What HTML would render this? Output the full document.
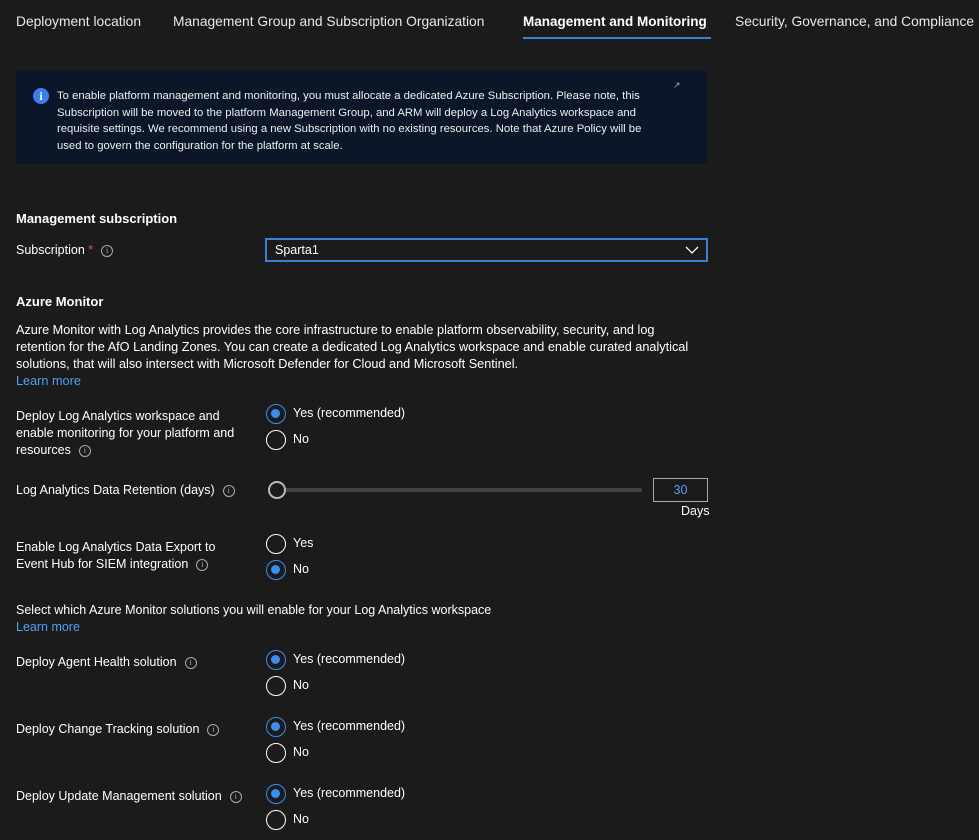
<!DOCTYPE html>
<html><head><style>
*{margin:0;padding:0;box-sizing:border-box}
body{width:979px;height:840px;background:#1b1b1b;color:#fff;font-family:"Liberation Sans",sans-serif;font-size:12.5px;position:relative;overflow:hidden}
.a{position:absolute;white-space:nowrap}
.tab{font-size:13.8px;top:14px}
.info{display:inline-block;width:12px;height:12px;border:1px solid #aaa;border-radius:50%;font-size:8px;line-height:10px;text-align:center;color:#aaa;vertical-align:middle;margin-left:8px;font-family:"Liberation Serif",serif}
.r{position:absolute;width:20px;height:20px;border:1.5px solid #fff;border-radius:50%}
.r.on{border-color:#3b8ef0}
.r.on::after{content:"";position:absolute;left:4px;top:4px;width:9px;height:9px;border-radius:50%;background:#3b8ef0}
.lk{color:#4ea1f5}
</style></head><body>
<div class="a tab" style="left:16px;color:#e8e8e8">Deployment location</div>
<div class="a tab" style="left:173px;color:#e8e8e8">Management Group and Subscription Organization</div>
<div class="a tab" style="left:523px;font-weight:bold;font-size:13.5px">Management and Monitoring</div>
<div class="a" style="left:523px;top:37px;width:188px;height:2px;background:#3b82d6"></div>
<div class="a tab" style="left:735px;color:#e8e8e8">Security, Governance, and Compliance</div>

<div class="a" style="left:16px;top:71px;width:691px;height:93px;background:#0b1629"></div>
<div class="a" style="left:33px;top:88px;width:16px;height:16px;border-radius:50%;background:#3a7ff0;color:#fff;font-weight:bold;font-size:12px;text-align:center;line-height:16px;font-family:'Liberation Serif',serif">i</div>
<div class="a" style="left:673px;top:80px;color:#aaa;font-size:9px">↗</div>
<div class="a" style="left:57px;top:88px;font-size:11.3px;line-height:16.5px;color:#eee">To enable platform management and monitoring, you must allocate a dedicated Azure Subscription. Please note, this<br>Subscription will be moved to the platform Management Group, and ARM will deploy a Log Analytics workspace and<br>requisite settings. We recommend using a new Subscription with no existing resources. Note that Azure Policy will be<br>used to govern the configuration for the platform at scale.</div>

<div class="a" style="left:16px;top:211px;font-weight:bold;font-size:13px">Management subscription</div>
<div class="a" style="left:16px;top:243px">Subscription <span style="color:#e05050">*</span><span class="info">i</span></div>
<div class="a" style="left:265px;top:238px;width:443px;height:24px;border:2px solid #3b82d6;padding:3px 8px">Sparta1</div>
<svg class="a" style="left:685px;top:245px" width="14" height="10"><path d="M1 2 L7 8 L13 2" stroke="#fff" stroke-width="1.3" fill="none"/></svg>

<div class="a" style="left:16px;top:294px;font-weight:bold;font-size:13px">Azure Monitor</div>
<div class="a" style="left:16px;top:322px;line-height:17px;font-size:12.7px">Azure Monitor with Log Analytics provides the core infrastructure to enable platform observability, security, and log<br>retention for the AfO Landing Zones. You can create a dedicated Log Analytics workspace and enable curated analytical<br>solutions, that will also intersect with Microsoft Defender for Cloud and Microsoft Sentinel.<br><span class="lk">Learn more</span></div>

<div class="a" style="left:16px;top:408px;line-height:17px">Deploy Log Analytics workspace and<br>enable monitoring for your platform and<br>resources<span class="info">i</span></div>
<div class="r on" style="left:266px;top:404px"></div><div class="a" style="left:293px;top:406px">Yes (recommended)</div>
<div class="r" style="left:266px;top:430px"></div><div class="a" style="left:293px;top:432px">No</div>

<div class="a" style="left:16px;top:483px">Log Analytics Data Retention (days)<span class="info">i</span></div>
<div class="a" style="left:278px;top:488px;width:364px;height:4px;background:#444;border-radius:2px"></div>
<div class="a" style="left:268px;top:481px;width:18px;height:18px;border:2px solid #bbb;border-radius:50%;background:#1b1b1b"></div>
<div class="a" style="left:653px;top:478px;width:55px;height:24px;border:1px solid #aaa;color:#4ea1f5;text-align:center;line-height:22px">30</div>
<div class="a" style="left:681px;top:504px">Days</div>

<div class="a" style="left:16px;top:539px;line-height:17px">Enable Log Analytics Data Export to<br>Event Hub for SIEM integration<span class="info">i</span></div>
<div class="r" style="left:266px;top:534px"></div><div class="a" style="left:293px;top:536px">Yes</div>
<div class="r on" style="left:266px;top:560px"></div><div class="a" style="left:293px;top:562px">No</div>

<div class="a" style="left:16px;top:602px;line-height:17px">Select which Azure Monitor solutions you will enable for your Log Analytics workspace<br><span class="lk">Learn more</span></div>

<div class="a" style="left:16px;top:655px">Deploy Agent Health solution<span class="info">i</span></div>
<div class="r on" style="left:266px;top:650px"></div><div class="a" style="left:293px;top:652px">Yes (recommended)</div>
<div class="r" style="left:266px;top:676px"></div><div class="a" style="left:293px;top:678px">No</div>

<div class="a" style="left:16px;top:722px">Deploy Change Tracking solution<span class="info">i</span></div>
<div class="r on" style="left:266px;top:717px"></div><div class="a" style="left:293px;top:719px">Yes (recommended)</div>
<div class="r" style="left:266px;top:743px"></div><div class="a" style="left:293px;top:745px">No</div>

<div class="a" style="left:16px;top:789px">Deploy Update Management solution<span class="info">i</span></div>
<div class="r on" style="left:266px;top:784px"></div><div class="a" style="left:293px;top:786px">Yes (recommended)</div>
<div class="r" style="left:266px;top:810px"></div><div class="a" style="left:293px;top:812px">No</div>
</body></html>
